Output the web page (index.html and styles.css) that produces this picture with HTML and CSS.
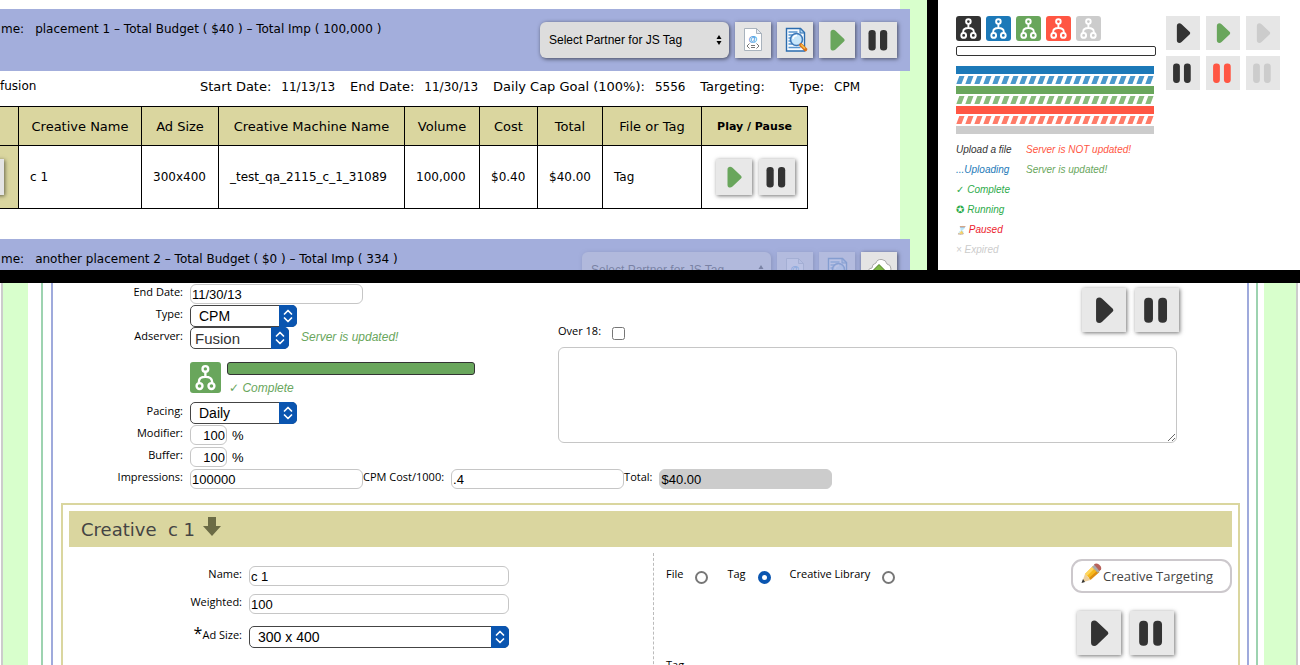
FILE: index.html
```
<!DOCTYPE html>
<html lang="en">
<head>
<meta charset="utf-8">
<title>Campaign placements</title>
<link rel="stylesheet" href="styles.css">
</head>
<body>
<svg class="defs" width="0" height="0" aria-hidden="true">
  <symbol id="play" viewBox="0 0 36 36"><path fill="currentColor" d="M11.5 10.5C11.5 7.6 14.6 7 16.5 8.8L25.2 17Q26.2 18.2 25.2 19.3L16.5 27.6C14.6 29.4 11.5 28.8 11.5 26Z"/></symbol>
  <symbol id="pause" viewBox="0 0 36 36"><rect x="7.5" y="8" width="7.2" height="20.5" rx="3.3" fill="currentColor"/><rect x="19" y="8" width="7.2" height="20.5" rx="3.3" fill="currentColor"/></symbol>
  <symbol id="fork" viewBox="0 0 25 25"><g fill="none" stroke="#fff" stroke-width="1.9"><circle cx="12.4" cy="5.6" r="2.3"/><circle cx="7.7" cy="19.4" r="2.4"/><circle cx="17.3" cy="19.4" r="2.4"/><path d="M12.4 8v4.200M7.200 17v-1.300q0-3.700 5.200-3.700t5.400 3.700V17"/></g></symbol>
  <symbol id="tagdoc" viewBox="0 0 36 36"><path fill="#fff" stroke="#a9b3bd" d="M9.500 6.500h12l5 5v17h-17z"/><path fill="#e8eef4" stroke="#a9b3bd" d="M21.500 6.500v5h5z"/><text x="18" y="20" text-anchor="middle" font-family="Liberation Sans, sans-serif" font-size="9" font-weight="bold" fill="#2f92e0">@</text><path fill="none" stroke="#777" d="M14.500 21.500l-2.500 2.500 2.500 2.500M21.500 21.500l2.500 2.500-2.500 2.500M16 23.500h4M16 25.500h4"/></symbol>
  <symbol id="search" viewBox="0 0 36 36"><path fill="#f6fbff" stroke="#2b6cae" stroke-width="1.4" d="M9.500 6.500h14l4 4v18.500h-18z"/><path fill="#b9dcf5" stroke="#2b6cae" d="M23 6.500v4.500h4.500z"/><path stroke="#5795cf" stroke-width="1.3" d="M11.500 10h9M11.500 13h5M11.500 16h3M11.500 19h3M11.500 22h4M11.500 25.500h12"/><circle cx="19.500" cy="17.500" r="6" fill="#bfe3fa" fill-opacity=".85" stroke="#3d78b8" stroke-width="1.6"/><path stroke="#fff" stroke-width="1.5" fill="none" d="M16 17q.5-3.500 4-3.500"/><path stroke="#d9701b" stroke-width="3.6" stroke-linecap="round" d="M24 23l4.500 4.500"/><path stroke="#f8c34a" stroke-width="1.6" d="M24 22.500l4 4"/></symbol>
  <symbol id="cloud" viewBox="0 0 36 36"><path fill="#fff" stroke="#aaa" d="M10 24q-4-1-3-5 1-3 4-3 0-4 4-5 1-4 6-3.500 4 .5 5 4.500 4 .5 4 5t-4 6z"/><path fill="#7eb944" stroke="#4a7d22" d="M18 12.500l8 8h-4.500v7h-7v-7H10z"/></symbol>
  <symbol id="updown" viewBox="0 0 18 22"><path fill="none" stroke="#fff" stroke-width="1.7" stroke-linecap="round" stroke-linejoin="round" d="M5.500 9L9 5.500 12.500 9M5.500 13L9 16.500 12.500 13"/></symbol>
  <symbol id="tinyupdown" viewBox="0 0 6 12"><path fill="currentColor" d="M.5 5L3 1l2.500 4zM.5 7h5L3 11z"/></symbol>
</svg>

<main class="board">
  <section class="panel placements">
    <div class="placements-sheet">
      <header class="bar">
        <p class="bar-title"><span>me:</span><span>placement 1 – Total Budget ( $40 ) – Total Imp ( 100,000 )</span></p>
        <div class="tools">
          <div class="partner"><select aria-label="Partner for JS Tag"><option>Select Partner for JS Tag</option></select><svg><use href="#tinyupdown"/></svg></div>
          <button class="tool" aria-label="JS tag"><svg><use href="#tagdoc"/></svg></button>
          <button class="tool" aria-label="Preview"><svg><use href="#search"/></svg></button>
          <button class="tool green" aria-label="Play"><svg><use href="#play"/></svg></button>
          <button class="tool" aria-label="Pause"><svg><use href="#pause"/></svg></button>
        </div>
      </header>

      <div class="info">
        <span>fusion</span>
        <dl>
          <div><dt>Start Date:</dt><dd>11/13/13</dd></div>
          <div><dt>End Date:</dt><dd>11/30/13</dd></div>
          <div><dt>Daily Cap Goal (100%):</dt><dd>5556</dd></div>
          <div><dt>Targeting:</dt><dd></dd></div>
          <div><dt>Type:</dt><dd>CPM</dd></div>
        </dl>
      </div>

      <table class="creatives">
        <colgroup><col class="c-edit"><col class="c-name"><col class="c-size"><col class="c-machine"><col class="c-volume"><col class="c-cost"><col class="c-total"><col class="c-file"><col class="c-play"></colgroup>
        <thead>
          <tr><th></th><th>Creative Name</th><th>Ad Size</th><th>Creative Machine Name</th><th>Volume</th><th>Cost</th><th>Total</th><th>File or Tag</th><th class="strong">Play / Pause</th></tr>
        </thead>
        <tbody>
          <tr>
            <td class="edit"><div><button class="tool" aria-label="Edit"></button></div></td>
            <td>c 1</td><td>300x400</td><td>_test_qa_2115_c_1_31089</td><td>100,000</td><td>$0.40</td><td>$40.00</td><td>Tag</td>
            <td><div class="pair"><button class="tool green" aria-label="Play"><svg><use href="#play"/></svg></button><button class="tool" aria-label="Pause"><svg><use href="#pause"/></svg></button></div></td>
          </tr>
        </tbody>
      </table>

      <header class="bar">
        <p class="bar-title"><span>me:</span><span>another placement 2 – Total Budget ( $0 ) – Total Imp ( 334 )</span></p>
        <div class="tools">
          <div class="partner faded"><select disabled aria-label="Partner for JS Tag"><option>Select Partner for JS Tag</option></select><svg><use href="#tinyupdown"/></svg></div>
          <button class="tool faded" disabled aria-label="JS tag"><svg><use href="#tagdoc"/></svg></button>
          <button class="tool faded" disabled aria-label="Preview"><svg><use href="#search"/></svg></button>
          <button class="tool" aria-label="Upload"><svg><use href="#cloud"/></svg></button>
        </div>
      </header>
    </div>
  </section>

  <section class="panel kit">
    <div class="kit-main">
      <div class="forks">
        <svg class="fork dark-bg"><use href="#fork"/></svg><svg class="fork blue-bg"><use href="#fork"/></svg><svg class="fork green-bg"><use href="#fork"/></svg><svg class="fork red-bg"><use href="#fork"/></svg><svg class="fork grey-bg"><use href="#fork"/></svg>
      </div>
      <div class="track"></div>
      <div class="strips">
        <div class="blue-bg"></div>
        <svg><defs><pattern id="sb" width="9" height="8" patternUnits="userSpaceOnUse"><path fill="#4a98cc" d="M.3 8L3.300 0H8.500L5.500 8z"/></pattern></defs><rect width="100%" height="8" fill="url(#sb)"/></svg>
        <div class="green-bg"></div>
        <svg><defs><pattern id="sg" width="9" height="8" patternUnits="userSpaceOnUse"><path fill="#88bb7c" d="M.3 8L3.300 0H8.500L5.500 8z"/></pattern></defs><rect width="100%" height="8" fill="url(#sg)"/></svg>
        <div class="red-bg"></div>
        <svg><defs><pattern id="sr" width="9" height="8" patternUnits="userSpaceOnUse"><path fill="#ff7b68" d="M.3 8L3.300 0H8.500L5.500 8z"/></pattern></defs><rect width="100%" height="8" fill="url(#sr)"/></svg>
        <div class="grey-bg"></div>
      </div>
      <div class="states">
        <ul>
          <li class="dark">Upload a file</li>
          <li class="blue">...Uploading</li>
          <li class="bright">✓ Complete</li>
          <li class="bright">✪ Running</li>
          <li class="crimson"><span class="pale">⌛</span> Paused</li>
          <li class="grey">× Expired</li>
        </ul>
        <ul>
          <li class="red">Server is NOT updated!</li>
          <li class="green">Server is updated!</li>
        </ul>
      </div>
    </div>
    <div class="kit-buttons">
      <button aria-label="Play"><svg><use href="#play"/></svg></button>
      <button class="green" aria-label="Play, running"><svg><use href="#play"/></svg></button>
      <button class="grey" aria-label="Play, inactive"><svg><use href="#play"/></svg></button>
      <button aria-label="Pause"><svg><use href="#pause"/></svg></button>
      <button class="red" aria-label="Pause, paused"><svg><use href="#pause"/></svg></button>
      <button class="grey" aria-label="Pause, inactive"><svg><use href="#pause"/></svg></button>
    </div>
  </section>

  <section class="panel editor">
    <div class="page"><div class="sheet"><div class="campaign"><div class="placement">
      <div class="upper">
        <div class="fields">
          <div class="row"><label for="end">End Date:</label><input id="end" class="box" value="11/30/13"></div>
          <div class="row"><label for="type">Type:</label><div class="drop w-type"><select id="type"><option>CPM</option></select><svg><use href="#updown"/></svg></div></div>
          <div class="row"><label for="adserver">Adserver:</label><div class="drop w-server"><select id="adserver"><option>Fusion</option></select><svg><use href="#updown"/></svg></div><em class="note">Server is updated!</em></div>
          <div class="upload">
            <svg class="fork big green-bg"><use href="#fork"/></svg>
            <div><div class="meter"></div><em>✓ Complete</em></div>
          </div>
          <div class="row"><label for="pacing">Pacing:</label><div class="drop w-type"><select id="pacing"><option>Daily</option></select><svg><use href="#updown"/></svg></div></div>
          <div class="row"><label for="modifier">Modifier:</label><input id="modifier" class="box small" value="100"><span class="pct">%</span></div>
          <div class="row"><label for="buffer">Buffer:</label><input id="buffer" class="box small" value="100"><span class="pct">%</span></div>
        </div>
        <div class="notes">
          <div class="notes-head">
            <div class="over"><label for="over">Over 18:</label><input id="over" type="checkbox"></div>
            <div class="pair large"><button class="tool" aria-label="Play placement"><svg><use href="#play"/></svg></button><button class="tool" aria-label="Pause placement"><svg><use href="#pause"/></svg></button></div>
          </div>
          <textarea aria-label="Notes"></textarea>
        </div>
      </div>
      <div class="row costs">
        <label for="imp">Impressions:</label><input id="imp" class="box" value="100000">
        <label class="tight" for="cpm">CPM Cost/1000:</label><input id="cpm" class="box" value=".4">
        <label class="tight" for="total">Total:</label><input id="total" class="box sum" value="$40.00" readonly>
      </div>

      <div class="creative">
        <h2>Creative&nbsp; c 1 <svg viewBox="0 0 18 19"><path fill="#6b6b45" d="M5 0h8v9h5l-9 10L0 9h5z"/></svg></h2>
        <div class="creative-body">
          <div class="creative-fields">
            <div class="row"><label for="cname">Name:</label><input id="cname" class="box" value="c 1"></div>
            <div class="row"><label for="weight">Weighted:</label><input id="weight" class="box" value="100"></div>
            <div class="row last"><label for="size"><span class="star">*</span>Ad Size:</label><div class="drop"><select id="size"><option>300 x 400</option></select><svg><use href="#updown"/></svg></div></div>
          </div>
          <div class="source">
            <div class="choices">
              <label for="sfile">File</label><input type="radio" name="source" id="sfile">
              <label for="stag">Tag</label><input type="radio" name="source" id="stag" checked>
              <label for="slib">Creative Library</label><input type="radio" name="source" id="slib">
            </div>
            <p>Tag</p>
          </div>
          <div class="actions">
            <button class="targeting"><svg viewBox="0 0 21 20"><path fill="#f6b81c" d="M4 11L12 3l6 6-9 7z"/><path fill="#ffd65a" d="M4 11l8-8 2 2-8 8z"/><path fill="#dd8e11" d="M8 15l9-8 1.500 2-9 8z"/><path fill="#aaa" d="M11 4l3-3 6 5-3 4z"/><path fill="#b8625a" d="M13 1.500q2-2 5 0 3 2 2 5L18.500 8z"/><path fill="#edcf9b" d="M4 11l5.500 6L1 19.500z"/><path fill="#333" d="M2 16l2 3-3.500 1z"/></svg>Creative Targeting</button>
            <div class="pair large"><button class="tool" aria-label="Play creative"><svg><use href="#play"/></svg></button><button class="tool" aria-label="Pause creative"><svg><use href="#pause"/></svg></button></div>
          </div>
        </div>
      </div>
    </div></div></div></div>
  </section>
</main>
</body>
</html>
```
FILE: styles.css
```
* { box-sizing: border-box; }
body { margin: 0; background: #000; color: #000; font-family: "DejaVu Sans", sans-serif; font-size: 12px; }
p, dl, dd, ul, h2 { margin: 0; padding: 0; }
ul { list-style: none; }
button, input, select, textarea { margin: 0; font-family: "Liberation Sans", Arial, sans-serif; }
button { padding: 0; border: 0; color: #333; }
.defs { position: absolute; }

.board { display: grid; grid-template-columns: 927fr 362fr; grid-template-rows: 270px 1fr; column-gap: 11px; row-gap: 13px; height: 100vh; overflow: hidden; }
.panel { background: #fff; overflow: hidden; min-width: 0; }

.dark { color: #333; }
.blue { color: #1c79b8; }
.green { color: #69a65c; }
.red { color: #ff5643; }
.grey { color: #ccc; }
.bright { color: #2cab4a; }
.crimson { color: #ec1c2c; }
.pale { font-size: 8px; opacity: .7; }
.dark-bg { background: #333; }
.blue-bg { background: #1c79b8; }
.green-bg { background: #69a65c; }
.red-bg { background: #ff5643; }
.grey-bg { background: #ccc; }

/* placement list */
.placements { background: #d8ffcc; }
.placements-sheet { margin-right: 27px; padding-top: 9px; height: 100%; background: #fff; }
.bar { display: flex; justify-content: space-between; height: 62px; margin-right: -10px; padding: 13px 13px 0 1px; background: #a3aedc; }
.bar-title { display: flex; gap: 11px; line-height: 14px; white-space: nowrap; }
.tools { display: flex; gap: 6px; }
.tool { display: block; width: 36px; height: 36px; background: #e4e4e4; box-shadow: 1px 1px 4px rgba(0, 0, 0, .55); }
.tool svg { display: block; width: 100%; height: 100%; }
.tool.green { color: #69a65c; }
.partner { position: relative; width: 189px; height: 36px; }
.partner select { width: 100%; height: 100%; padding: 0 9px; border: 0; border-radius: 6px; appearance: none; background: #ddd; color: #000; font-size: 12px; opacity: 1; box-shadow: 1px 1px 4px rgba(0, 0, 0, .6); }
.partner svg { position: absolute; right: 7px; top: 12px; width: 6px; height: 12px; }
.faded { opacity: .25; }

.info { display: flex; align-items: center; height: 30px; padding-right: 40px; }
.info > span { width: 200px; }
.info dl { display: flex; flex: 1; justify-content: space-between; white-space: nowrap; }
.info dl div { display: flex; align-items: baseline; gap: 10px; }
.info dt { font-size: 13px; }

.creatives { width: 809px; margin: 5px 0 30px -1px; border-collapse: collapse; table-layout: fixed; }
.creatives th, .creatives td { border: 1px solid #000; padding: 0 0 0 11px; text-align: left; white-space: nowrap; }
.creatives th { height: 39px; padding: 0; background: #dad69f; font-size: 13px; font-weight: normal; text-align: center; }
.creatives th.strong { font-size: 11px; font-weight: bold; }
.creatives td { height: 63px; }
.creatives td.edit { padding: 0; background: #dad69f; }
.edit div { display: flex; justify-content: flex-end; padding: 6px 14px 6px 0; overflow: hidden; }
.edit .tool { flex: none; }
.c-edit { width: 19px; } .c-name { width: 123px; } .c-size { width: 77px; } .c-machine { width: 186px; } .c-volume { width: 75px; }
.c-cost { width: 58px; } .c-total { width: 65px; } .c-file { width: 99px; } .c-play { width: 106px; }
.pair { display: flex; gap: 7px; }
.creatives .pair { padding-left: 3px; }
.pair .tool { background: #e8e8e8; }

/* interface kit */
.kit { display: flex; gap: 10px; padding: 16px 18px; }
.kit-main { width: 200px; }
.forks { display: flex; gap: 5px; }
.fork { display: block; width: 25px; height: 25px; border-radius: 3px; }
.track { height: 10px; margin: 5px 0 10px; border: 1px solid #333; border-radius: 2px; }
.strips { display: grid; gap: 2px; margin-right: 2px; }
.strips > * { display: block; width: 100%; height: 8px; }
.states { display: flex; gap: 14px; margin-top: 6px; font: italic 10px/20px "Liberation Sans", "DejaVu Sans", sans-serif; white-space: nowrap; }
.states li { height: 20px; }
.states ul:first-child { width: 56px; }
.kit-buttons { display: grid; grid-template-columns: repeat(3, 34px); grid-auto-rows: 34px; gap: 6px; align-content: start; }
.kit-buttons button { background: #e6e6e6; }
.kit-buttons svg { display: block; width: 34px; height: 34px; }
.kit-buttons .green { color: #69a65c; }
.kit-buttons .red { color: #ff5643; }
.kit-buttons .grey { color: #ccc; }

/* editor */
.editor { grid-column: 1 / -1; }
.page { height: 100%; margin: 0 2px 0 1px; padding: 0 32px 0 25px; border: solid #ccc; border-width: 0 2px; background: #d8ffcc; }
.sheet { height: 100%; padding: 0 6px 0 13px; background: #fff; }
.campaign { height: 100%; padding: 0 7px 0 8px; border: solid #9dd3b0; border-width: 0 2px; }
.placement { height: 100%; border: solid #9faadc; border-width: 0 2px; }
.upper { display: flex; }
.fields { width: 505px; }
.row { display: flex; height: 22px; }
.row > label { width: 130px; margin-right: 7px; text-align: right; }
label, .source p { font: 11px/18px "Open Sans", sans-serif; white-space: nowrap; }
.box { width: 173px; height: 20px; margin-top: 1px; padding: 0 1px; border: 1px solid #c6c6c6; border-radius: 6px; background: #fff; font-size: 13px; }
.small { width: 37px; text-align: right; }
.pct { margin-left: 5px; font: 13px/24px "Liberation Sans", sans-serif; }
.sum { border-color: #ccc; background: #ccc; }
.row > label.tight { width: auto; }
.drop { position: relative; height: 22px; }
.drop select { display: block; width: 100%; height: 22px; padding: 0 8px; border: 1px solid #444; border-radius: 5px; appearance: none; background: #fff; color: #000; font-size: 14px; }
.drop svg { position: absolute; right: 0; top: 0; width: 18px; height: 22px; border-radius: 0 5px 5px 0; background: #0a55b0; pointer-events: none; }
.w-type { width: 107px; }
.w-server { width: 99px; }
.w-server select { padding: 0 4px; font-size: 15px; color: #333; }
em { color: #69a65c; font: italic 12px/20px "Liberation Sans", "DejaVu Sans", sans-serif; }
.note { margin-left: 12px; }
.upload { display: flex; gap: 6px; height: 53px; padding: 13px 0 0 137px; }
.big { width: 31px; height: 31px; }
.meter { width: 248px; height: 13px; margin-bottom: 3px; border: 1px solid #333; border-radius: 3px; background: #69a65c; }
.upload em { margin-left: 2px; }

.notes { flex: 1; margin-right: 68px; padding-top: 5px; }
.notes-head { display: flex; justify-content: space-between; height: 59px; }
.over { display: flex; gap: 11px; padding-top: 34px; }
.over input { width: 13px; height: 13px; margin-top: 5px; }
.large .tool { width: 44px; height: 44px; }
.large { gap: 9px; }
textarea { display: block; width: calc(100% - 2px); height: 96px; border: 1px solid #c6c6c6; border-radius: 6px; background: #fff; }

.creative { margin: 13px 7px 0 8px; height: 100%; padding: 6px 6px 0; border: 2px solid #dad69f; }
.creative h2 { display: flex; gap: 8px; align-items: center; height: 36px; padding-left: 12px; background: #dad69f; color: #444; font-size: 18px; font-weight: normal; }
.creative h2 svg { width: 18px; height: 19px; margin-bottom: 6px; }
.creative-body { display: flex; }
.creative-fields { width: 584px; padding-top: 18px; }
.creative-fields .row { height: 28px; }
.creative-fields .row > label { width: 173px; }
.creative-fields .box, .creative-fields .drop { width: 260px; }
.creative-fields .last { margin-top: 5px; }
.star { font-size: 16px; line-height: 12px; }
.source { flex: 1; margin-top: 6px; padding: 12px 0 0 12px; border-left: 1px dashed #bbb; }
.choices { display: flex; height: 91px; }
.choices input { width: 13px; height: 13px; margin: 6px 19px 0 12px; border: 2px solid #777; border-radius: 50%; appearance: none; background: #fff; }
.choices input:checked { border: 4px solid #0a55b0; }
.actions { padding-top: 12px; }
.targeting { display: flex; align-items: center; gap: 1px; width: 161px; height: 34px; margin-bottom: 18px; padding-left: 8px; border: 2px solid #ccc8cc; border-radius: 11px; background: #fff; color: #444; font: 13px "Open Sans", sans-serif; white-space: nowrap; }
.targeting svg { width: 21px; height: 20px; margin-bottom: 6px; }
.actions .pair { padding-left: 6px; }
```
